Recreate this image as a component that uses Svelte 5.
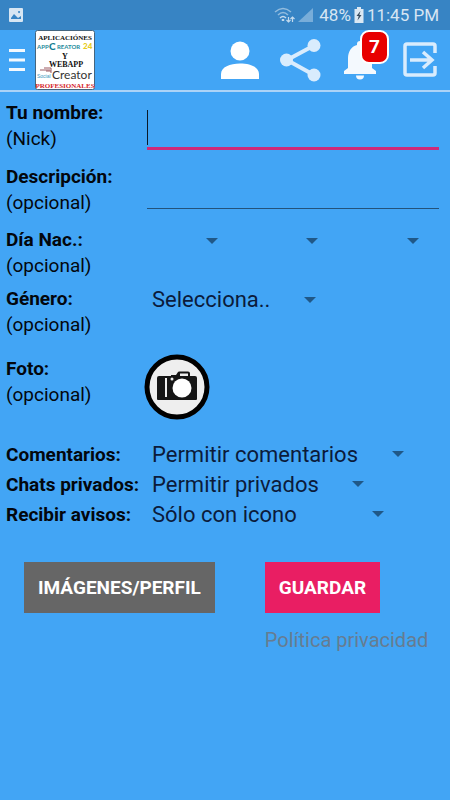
<script>
  let name = $state('');
  let description = $state('');
  const dateParts = ['Día', 'Mes', 'Año'];
  const preferences = [
    { id: 'comments', label: 'Comentarios:', value: 'Permitir comentarios' },
    { id: 'chats', label: 'Chats privados:', value: 'Permitir privados' },
    { id: 'alerts', label: 'Recibir avisos:', value: 'Sólo con icono', wide: true }
  ];
</script>

<div class="screen">
  <div class="status">
    <svg width="16" height="16" viewBox="0 0 16 16">
      <path fill="#d7e6f3" fill-rule="evenodd" d="M2 1h12a1 1 0 0 1 1 1v12a1 1 0 0 1-1 1H2a1 1 0 0 1-1-1V2a1 1 0 0 1 1-1zM3 12h10V9l-3 2-4-4-3 4zM11 4a1 1 0 1 0 .1 0z" />
    </svg>
    <div class="system">
      <svg width="21" height="18" viewBox="0 0 21 18" fill="none" stroke="#c3daed" stroke-width="1.5">
        <path d="M1 6Q9 -1 17 6M4 9Q9 4 14 9" opacity=".65" />
        <path d="M6 12Q9 9 12 12" />
        <path d="M9 13v2" stroke-width="2.4" />
        <path d="M14.500 11v5M12.500 14l2 2 2-2M18.500 16v-5M16.500 13l2-2 2 2" stroke-width="1.200" />
      </svg>
      <svg width="15" height="16" viewBox="0 0 15 16"><path d="M15 1v14H0z" fill="#78add9" /></svg>
      <span class="battery">48%</span>
      <svg width="10" height="16" viewBox="0 0 10 16">
        <path d="M3 0h4v2h2.500v14H.5V2H3z" fill="#dbe8f3" />
        <path d="M6.500 4L2.500 9h2.200L3.500 13.500 7.500 8H5.300z" fill="#3a4c5d" />
      </svg>
      <span>11:45 PM</span>
    </div>
  </div>

  <header>
    <button class="menu" aria-label="Menú">
      <svg width="16" height="22" viewBox="0 0 16 22"><path d="M0 1.500h16M0 11h16M0 20.500h16" stroke="#f4f9fe" stroke-width="3" /></svg>
    </button>
    <svg class="logo" width="60" height="60" viewBox="0 0 60 60">
      <rect x=".5" y=".5" width="59" height="59" rx="2" fill="#fff" stroke="#44657f" />
      <g text-anchor="middle" font-family="'Liberation Serif', serif" font-weight="bold" fill="#111">
        <text x="30" y="10" font-size="7">APLICACIÓNES</text>
        <text x="30" y="29" font-size="8">Y</text>
        <text x="31" y="37" font-size="8">WEBAPP</text>
      </g>
      <g font-family="Lato, sans-serif" font-weight="bold">
        <text x="2" y="19" font-size="6" fill="#258b9c">APP</text>
        <text x="14" y="20" font-size="10" font-weight="900" fill="#147d92">C</text>
        <text x="22" y="19" font-size="6" fill="#258b9c">REATOR</text>
        <text x="48" y="19" font-size="8" font-weight="900" fill="#e7cc22">24</text>
      </g>
      <path d="M5 40h10M9 38h7v5M11 41h5" fill="none" stroke="#9b5960" />
      <text x="2" y="48" font-size="5" font-family="'Liberation Sans', sans-serif" fill="#3697c0">Social</text>
      <text x="17" y="49" font-size="12" font-family="Lato, sans-serif" fill="#333">Creator</text>
      <text x="30" y="58" font-size="7" text-anchor="middle" font-family="'Liberation Serif', serif" font-weight="bold" fill="#d51d2a">PROFESIONALES</text>
    </svg>
    <nav>
      <button aria-label="Perfil">
        <svg width="40" height="44" viewBox="0 0 40 44" fill="#fff">
          <circle cx="20" cy="13" r="9.500" />
          <path d="M1 41v-5C1 29 10 25.500 20 25.500S39 29 39 36v5z" />
        </svg>
      </button>
      <button aria-label="Compartir">
        <svg width="42" height="44" viewBox="0 0 42 44" fill="#d9ecfd">
          <path d="M35 7.500L8 22l27 15" fill="none" stroke="#d9ecfd" stroke-width="4" />
          <circle cx="35" cy="7.500" r="6.500" /><circle cx="7.500" cy="22" r="6.500" /><circle cx="35" cy="37" r="6.500" />
        </svg>
      </button>
      <button class="bell" aria-label="Avisos">
        <svg width="36" height="44" viewBox="0 0 36 44" fill="#f4f9fe">
          <path d="M18 3a3 3 0 0 0-3 3v1C9 8.500 6 14 6 20v10l-4 3v3h32v-3l-4-3V20c0-6-3-11.500-9-13V6a3 3 0 0 0-3-3zM14 37.500a4 4 0 0 0 8 0z" />
        </svg>
        <span class="badge">7</span>
      </button>
      <button aria-label="Salir">
        <svg width="36" height="44" viewBox="0 0 36 44" fill="none" stroke="#d9ecfd" stroke-width="3.500">
          <path d="M33 15V8a2 2 0 0 0-2-2H5a2 2 0 0 0-2 2v27a2 2 0 0 0 2 2h26a2 2 0 0 0 2-2v-7" />
          <path d="M8 22h22M21 14l9 8-9 8" />
        </svg>
      </button>
    </nav>
  </header>

  <form onsubmit={(e) => e.preventDefault()}>
    <div class="row">
      <label for="name"><b>Tu nombre:</b><br />(Nick)</label>
      <div class="text-field active"><span class="caret"></span><input id="name" bind:value={name} /></div>
    </div>
    <div class="row described">
      <label for="description"><b>Descripción:</b><br />(opcional)</label>
      <div class="text-field"><input id="description" bind:value={description} /></div>
    </div>
    <div class="row birth">
      <label for="birth-0"><b>Día Nac.:</b><br />(opcional)</label>
      <div class="date">
        {#each dateParts as part, i}
          <span class="picker"><select id="birth-{i}" aria-label={part}><option></option></select></span>
        {/each}
      </div>
    </div>
    <div class="row gender">
      <label for="gender"><b>Género:</b><br />(opcional)</label>
      <div><span class="picker"><select id="gender"><option>Selecciona..</option></select></span></div>
    </div>
    <div class="row photo">
      <label for="photo"><b>Foto:</b><br />(opcional)</label>
      <button id="photo" type="button" class="camera" aria-label="Foto">
        <svg width="66" height="66" viewBox="0 0 66 66">
          <circle cx="33" cy="33" r="30" fill="#eee" stroke="#000" stroke-width="5" />
          <path fill="#151515" fill-rule="evenodd" d="M15 22h12v-1h5l2-3a1.500 1.500 0 0 1 1-.5h9a2 2 0 0 1 2 2V22h5a2 2 0 0 1 2 2v21a1 1 0 0 1-1 1H14a1 1 0 0 1-1-1V24a2 2 0 0 1 2-2zM36 19.500V22h8v-2.500z" />
          <path d="M22 24v19" stroke="#eee" stroke-width="2" />
          <circle cx="28" cy="25" r="1.500" fill="#eee" />
          <circle cx="38" cy="34" r="9.500" fill="#fff" />
        </svg>
      </button>
    </div>

    <div class="preferences">
      {#each preferences as item}
        <div class="row">
          <label for={item.id}><b>{item.label}</b></label>
          <div><span class="picker" class:wide={item.wide}><select id={item.id}><option>{item.value}</option></select></span></div>
        </div>
      {/each}
    </div>

    <div class="actions">
      <div class="cell"><button type="button" class="action">IMÁGENES/PERFIL</button></div>
      <div class="cell">
        <button type="submit" class="action save">GUARDAR</button>
        <a href="#privacidad">Política privacidad</a>
      </div>
    </div>
  </form>
</div>

<style>
  :global(body) { margin: 0; background: #42a5f5; }
  .screen {
    min-height: 100vh;
    background: #42a5f5;
    color: #03070d;
    font-family: Roboto, 'Liberation Sans', sans-serif;
    font-size: 19px;
  }
  button, input, select { font: inherit; color: inherit; margin: 0; padding: 0; border: 0; border-radius: 0; background: none; }
  svg { display: block; }
  .status {
    display: flex;
    align-items: center;
    justify-content: space-between;
    height: 30px;
    padding: 0 11px 0 8px;
    background: #3784c4;
    color: #d7e6f3;
    font-size: 17px;
  }
  .system { display: flex; align-items: center; gap: 3px; }
  .battery { margin-left: 3px; }
  header {
    display: flex;
    align-items: center;
    height: 60px;
    border-bottom: 2px solid #acd3f7;
  }
  .menu { padding: 0 10px 0 9px; }
  nav { display: flex; margin-left: auto; }
  nav button { display: flex; align-items: center; justify-content: center; width: 60px; height: 60px; }
  .bell { position: relative; }
  .badge {
    position: absolute;
    top: 0;
    right: 1px;
    width: 25px;
    line-height: 30px;
    border: 2px solid #fff;
    border-radius: 9px;
    background: #e80000;
    color: #fff;
    font-weight: bold;
    text-align: center;
  }
  form { padding: 8px 11px 0 6px; }
  .row { display: grid; grid-template-columns: 141px minmax(0, 1fr); line-height: 26px; }
  .text-field { display: flex; align-items: flex-end; height: 44px; border-bottom: 1px solid #22537b; }
  .text-field input { flex: 1; min-width: 0; height: 36px; padding: 0 4px; outline: 0; }
  .active { height: 47px; border-bottom: 3px solid #cf2a78; }
  .caret { width: 1px; height: 35px; margin-bottom: 2px; background: #0a1a28; }
  .described { margin-top: 12px; }
  .birth { margin-top: 11px; }
  .gender { margin-top: 7px; }
  .date { display: flex; gap: 10px; }
  .date .picker { flex: 1; min-width: 0; }
  .picker { display: inline-grid; align-items: center; height: 28px; }
  .picker select {
    grid-area: 1 / 1;
    appearance: none;
    height: 28px;
    padding: 0 65px 0 5px;
    color: #0b1b3b;
    font-size: 22px;
  }
  .date select { width: 100%; padding: 0; }
  .picker::after {
    content: '';
    grid-area: 1 / 1;
    justify-self: end;
    margin-right: 20px;
    border: 6px solid transparent;
    border-top-color: #205887;
    border-bottom: 0;
    pointer-events: none;
  }
  .wide { min-width: 257px; }
  .photo { margin-top: 18px; align-items: start; }
  .camera { justify-self: start; margin: -2px 0 0 -3px; height: 66px; }
  .preferences { margin-top: 20px; }
  .preferences .row { height: 30px; line-height: 30px; }
  .actions { display: flex; gap: 50px; margin-top: 32px; padding-left: 18px; }
  .cell { display: flex; flex-direction: column; align-items: flex-start; }
  .action { height: 51px; padding: 0 14px; background: #666; color: #fff; font-weight: bold; }
  .save { background: #e91e63; }
  a { margin-top: 14px; line-height: 26px; color: #667c91; font-size: 20px; text-decoration: none; }
</style>
